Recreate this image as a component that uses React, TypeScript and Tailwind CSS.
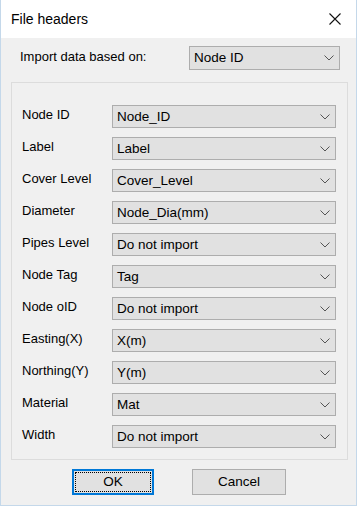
import React from "react";

const rows: [string, string][] = [
  ["Node ID", "Node_ID"],
  ["Label", "Label"],
  ["Cover Level", "Cover_Level"],
  ["Diameter", "Node_Dia(mm)"],
  ["Pipes Level", "Do not import"],
  ["Node Tag", "Tag"],
  ["Node oID", "Do not import"],
  ["Easting(X)", "X(m)"],
  ["Northing(Y)", "Y(m)"],
  ["Material", "Mat"],
  ["Width", "Do not import"],
];

const Chevron = () => (
  <svg width="10" height="6" viewBox="0 0 10 6" className="shrink-0">
    <path d="M0.5 0.5 L5 5 L9.5 0.5" fill="none" stroke="#555" strokeWidth="1" />
  </svg>
);

const Combo = ({ value, className }: { value: string; className: string }) => (
  <div
    className={`flex items-center justify-between border border-[#adadad] bg-[#e1e1e1] pl-[4px] pr-[5px] text-black ${className}`}
  >
    <span className="text-[13.5px] leading-none">{value}</span>
    <Chevron />
  </div>
);

export default function App() {
  return (
    <div
      className="flex h-[506px] w-[357px] flex-col border-x border-b border-[#c4d8ea] bg-[#f0f0f0] text-black"
      style={{ fontFamily: '"Liberation Sans", Arial, sans-serif' }}
    >
      <div className="flex h-[38px] shrink-0 items-center justify-between bg-white pl-[10px] pr-[15px]">
        <span className="text-[14px]">File headers</span>
        <svg width="12" height="12" viewBox="0 0 12 12">
          <path d="M0.5 0.5 L11.5 11.5 M11.5 0.5 L0.5 11.5" stroke="#111" strokeWidth="1.1" />
        </svg>
      </div>

      <div className="flex flex-col pl-[10px] pr-[8px] pt-[8px]">
        <div className="flex items-center justify-between pr-[8px]">
          <span className="ml-[9px] pb-[3px] text-[13px]">Import data based on:</span>
          <Combo value="Node ID" className="h-[24px] w-[151px]" />
        </div>

        <div className="mt-[12px] flex flex-col gap-[9px] border border-[#dcdcdc] pb-[11px] pl-[10px] pr-[11px] pt-[22px]">
          {rows.map(([label, value]) => (
            <div key={label} className="flex items-center">
              <span className="w-[90px] shrink-0 pb-[3px] text-[13px]">{label}</span>
              <Combo value={value} className="h-[23px] flex-1" />
            </div>
          ))}
        </div>

        <div className="mt-[9px] flex gap-[38px] pl-[61px]">
          <button className="flex h-[26px] w-[82px] items-center justify-center border-2 border-[#0078d7] bg-[#e1e1e1] p-[1px]">
            <span className="flex h-full w-full items-center justify-center border border-dotted border-black text-[13.5px]">
              OK
            </span>
          </button>
          <button className="flex h-[26px] w-[94px] items-center justify-center border border-[#adadad] bg-[#e1e1e1] text-[13.5px]">
            Cancel
          </button>
        </div>
      </div>
    </div>
  );
}
